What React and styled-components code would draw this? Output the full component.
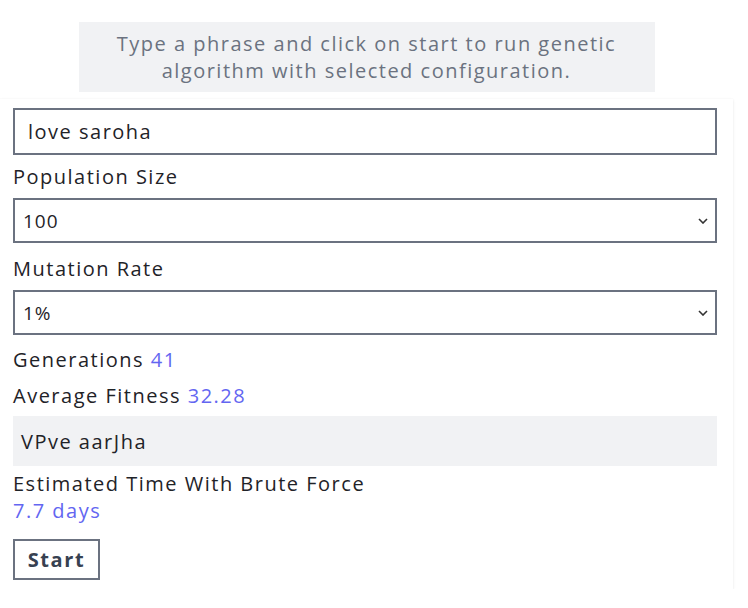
import React from "react";
import styled, { createGlobalStyle } from "styled-components";

const FONT = `"Open Sans", "Noto Sans", sans-serif`;

const Global = createGlobalStyle`
  html, body { margin: 0; padding: 0; background: #ffffff; }
  body { font-family: ${FONT}; color: #1f2328; letter-spacing: 1.5px; }
`;

const Page = styled.div`
  width: 733px;
  display: flex;
  flex-direction: column;
  align-items: center;
  padding-top: 22px;
`;

const Intro = styled.p`
  margin: 0;
  width: 576px;
  box-sizing: border-box;
  height: 70px;
  background: #f1f2f4;
  color: #6b7280;
  font-size: 20px;
  line-height: 27px;
  text-align: center;
  padding: 8px 20px;
`;

const Card = styled.div`
  margin-top: 7px;
  align-self: stretch;
  background: #fff;
  box-shadow: 0 1px 3px rgba(0, 0, 0, 0.08), 0 0 1px rgba(0, 0, 0, 0.06);
  padding: 9px 16px 9px 13px;
  display: flex;
  flex-direction: column;
`;

const TextInput = styled.input`
  box-sizing: border-box;
  height: 47px;
  border: 2px solid #6b7280;
  border-radius: 0;
  padding: 0 13px;
  font-family: ${FONT};
  letter-spacing: 1.5px;
  font-size: 20px;
  color: #1f2328;
  outline: none;
`;

const Label = styled.label`
  font-size: 20px;
  line-height: 28px;
  margin: ${(p) => p.$mt || 8}px 0 7px;
`;

const Select = styled.select`
  box-sizing: border-box;
  height: 45px;
  border: 2px solid #6b7280;
  border-radius: 0;
  padding: 0 8px;
  font-family: ${FONT};
  letter-spacing: 1px;
  font-size: 19px;
  color: #1f2328;
  outline: none;
  appearance: none;
  -webkit-appearance: none;
  background: #fff
    url("data:image/svg+xml,%3Csvg xmlns='http://www.w3.org/2000/svg' width='10' height='6' viewBox='0 0 10 6'%3E%3Cpath d='M1 1l4 4 4-4' fill='none' stroke='%23333' stroke-width='1.6'/%3E%3C/svg%3E")
    no-repeat right 7px center;
`;

const Stat = styled.div`
  font-size: 20px;
  line-height: 28px;
  margin-top: ${(p) => p.$mt}px;
`;

const Value = styled.span`
  color: #6366f1;
`;

const Result = styled.div`
  margin-top: 6px;
  height: 50px;
  background: #f1f2f4;
  display: flex;
  align-items: center;
  padding: 0 8px;
  font-size: 20px;
`;

const Estimate = styled.div`
  margin-top: 4px;
  font-size: 20px;
  line-height: 27px;
`;

const Start = styled.button`
  align-self: flex-start;
  margin-top: 15px;
  box-sizing: border-box;
  width: 87px;
  height: 41px;
  border: 2px solid #6b7280;
  border-radius: 0;
  background: #fff;
  color: #374151;
  font-family: ${FONT};
  letter-spacing: 1.6px;
  font-size: 20px;
  font-weight: 700;
  padding: 0;
  cursor: pointer;
`;

export default function App() {
  return (
    <>
      <Global />
      <Page>
        <Intro>
          Type a phrase and click on start to run genetic algorithm with selected configuration.
        </Intro>
        <Card>
          <TextInput defaultValue="love saroha" />
          <Label $mt={8}>Population Size</Label>
          <Select defaultValue="100">
            <option value="100">100</option>
            <option value="200">200</option>
            <option value="500">500</option>
          </Select>
          <Label $mt={12}>Mutation Rate</Label>
          <Select defaultValue="1">
            <option value="1">1%</option>
            <option value="2">2%</option>
            <option value="5">5%</option>
          </Select>
          <Stat $mt={11}>
            Generations <Value>41</Value>
          </Stat>
          <Stat $mt={8}>
            Average Fitness <Value>32.28</Value>
          </Stat>
          <Result>VPve aarJha</Result>
          <Estimate>
            Estimated Time With Brute Force
            <br />
            <Value>7.7 days</Value>
          </Estimate>
          <Start>Start</Start>
        </Card>
      </Page>
    </>
  );
}
